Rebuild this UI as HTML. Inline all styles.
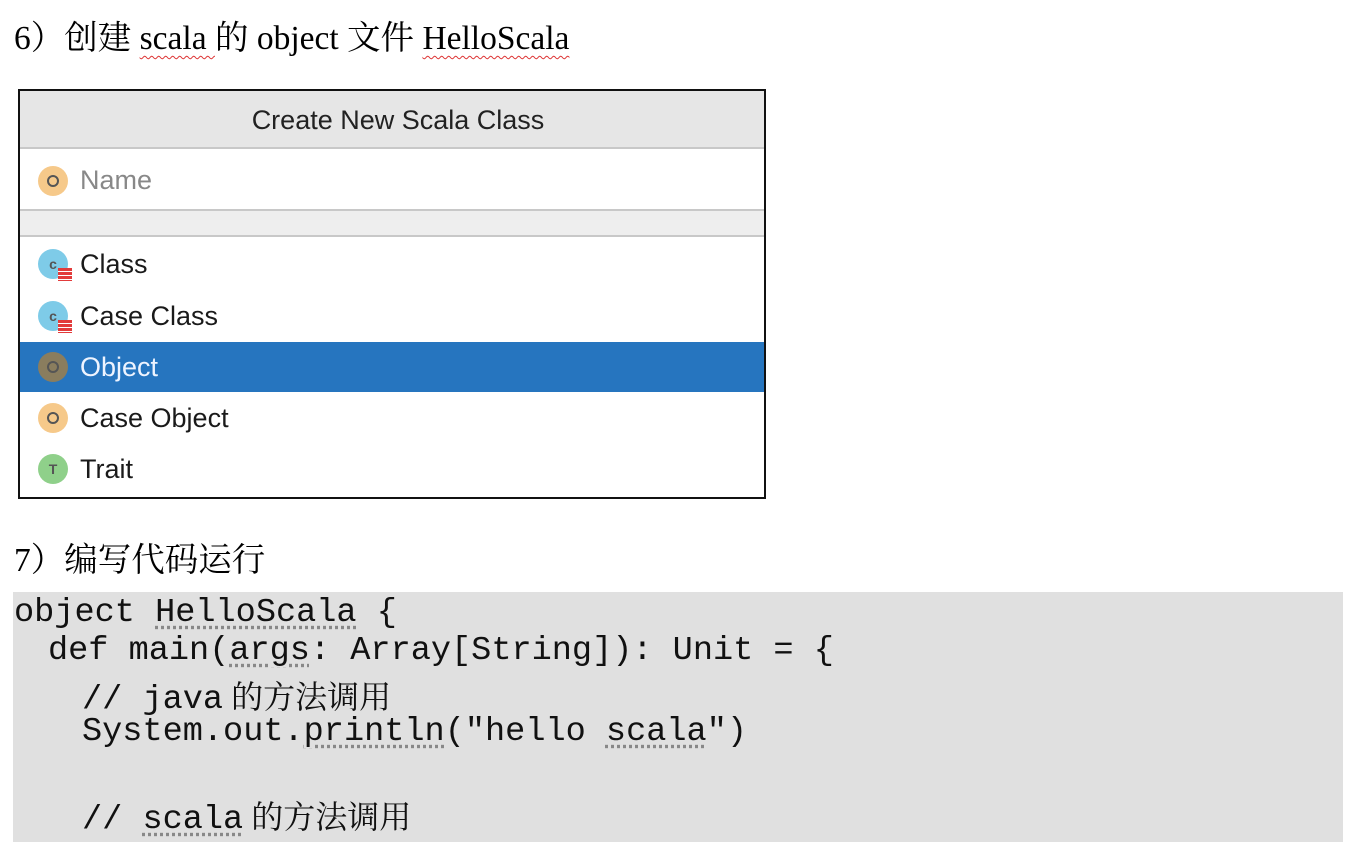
<!DOCTYPE html>
<html><head><meta charset="utf-8"><style>
*{margin:0;padding:0;box-sizing:border-box}
body{width:1348px;height:836px;background:#fff;position:relative;overflow:hidden;font-family:"Liberation Serif","Noto Serif CJK SC",serif}
.h{position:absolute;left:14px;font-size:33.5px;color:#000;white-space:nowrap}
.sq{text-decoration:underline wavy #d33;text-decoration-thickness:1px;text-underline-offset:6px}
.dlg{position:absolute;left:18px;top:89px;width:748px;height:410px;border:2px solid #111;background:#fff;font-family:"Liberation Sans","DejaVu Sans",sans-serif}
.hd{height:58px;background:#e6e6e6;border-bottom:2px solid #c8c8c8;text-align:center;line-height:58px;font-size:27px;color:#222;padding-left:12px}
.name{height:62px;border-bottom:2px solid #c8c8c8;display:flex;align-items:center;padding-left:18px;font-size:27px;color:#888;padding-top:3px}
.strip{height:26px;background:#eeeeee;border-bottom:2px solid #c8c8c8}
.it{height:52px;display:flex;align-items:center;padding-left:18px;font-size:27px;color:#1a1a1a}
.sel{background:#2675bf;color:#eef4ff;height:50px}
.ic{width:30px;height:30px;border-radius:50%;margin-right:12px;position:relative;display:flex;align-items:center;justify-content:center;font-size:14px;font-weight:bold;color:#555;flex:none}
.o::after{content:"";width:8px;height:8px;border:2.5px solid #555;border-radius:50%}
.code{position:absolute;left:13px;top:592px;width:1330px;height:250px;background:#e0e0e0;font-family:"Liberation Mono","Noto Sans CJK SC",monospace;font-size:33.6px;color:#111}
.code div{position:absolute;white-space:pre}
.dt{text-decoration:underline dotted #888;text-underline-offset:5px}
.cj{font-family:"Noto Serif CJK SC",serif;font-size:32px;margin-left:8px}
</style></head><body>
<div class="h" style="top:10px">6）创建 <span class="sq">scala </span>的 object 文件 <span class="sq">HelloScala</span></div>
<div class="dlg">
<div class="hd">Create New Scala Class</div>
<div class="name"><span class="ic o" style="background:#f6c98a"></span>Name</div>
<div class="strip"></div>
<div class="it" style="margin-top:1px"><span class="ic" style="background:#7ecbe8">c<span style="position:absolute;right:-4px;bottom:-2px;width:14px;height:13px;background:repeating-linear-gradient(#e23b3b 0 3px,#fff 3px 4px)"></span></span>Class</div>
<div class="it"><span class="ic" style="background:#7ecbe8">c<span style="position:absolute;right:-4px;bottom:-2px;width:14px;height:13px;background:repeating-linear-gradient(#e23b3b 0 3px,#fff 3px 4px)"></span></span>Case Class</div>
<div class="it sel"><span class="ic o" style="background:#8a7d5e"></span>Object</div>
<div class="it"><span class="ic o" style="background:#f6c98a"></span>Case Object</div>
<div class="it" style="height:50px"><span class="ic" style="background:#8fd08a">T</span>Trait</div>
</div>
<div class="h" style="top:532px">7）编写代码运行</div>
<div class="code">
<div style="top:2px;left:1px">object <span class="dt">HelloScala</span> {</div>
<div style="top:40px;left:35px">def main(<span class="dt">args</span>: Array[String]): Unit = {</div>
<div style="top:80px;left:69px">// java<span class="cj">的方法调用</span></div>
<div style="top:121px;left:69px">System.out.<span class="dt">println</span>("hello <span class="dt">scala</span>")</div>
<div style="top:200px;left:69px">// <span class="dt">scala</span><span class="cj">的方法调用</span></div>
</div>
</body></html>
